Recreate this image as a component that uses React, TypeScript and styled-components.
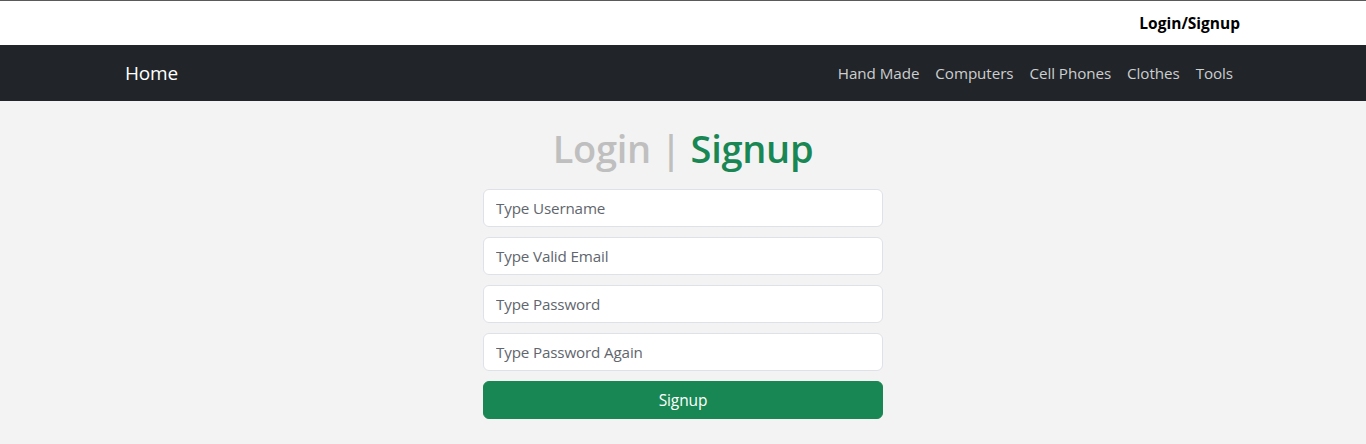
import React from "react";
import styled, { createGlobalStyle } from "styled-components";

const Global = createGlobalStyle`
  * { box-sizing: border-box; }
  body {
    margin: 0;
    font-family: "Open Sans", "Noto Sans", "Liberation Sans", sans-serif;
    background: #f3f3f3;
    color: #212529;
  }
`;

const TopBar = styled.header`
  background: #fff;
  border-top: 1px solid #5a5a5a;
  height: 45px;
`;

const Container = styled.div`
  max-width: 1140px;
  margin: 0 auto;
  padding: 0 12px;
  height: 100%;
  display: flex;
  align-items: center;
`;

const TopRight = styled(Container)`
  justify-content: flex-end;
`;

const TopLink = styled.a`
  font-weight: 700;
  font-size: 15.5px;
  color: #000;
  text-decoration: none;
  margin-right: 1px;
  padding-bottom: 1px;
`;

const NavBar = styled.nav`
  background: #212529;
  height: 56px;
`;

const NavInner = styled(Container)`
  justify-content: space-between;
`;

const Brand = styled.a`
  color: #fff;
  font-size: 19px;
  text-decoration: none;
  letter-spacing: -0.2px;
`;

const NavList = styled.ul`
  list-style: none;
  margin: 0;
  padding: 0;
  display: flex;
`;

const NavLink = styled.a`
  display: block;
  padding: 8px 8px;
  color: rgba(255, 255, 255, 0.78);
  font-size: 15.2px;
  text-decoration: none;
  letter-spacing: -0.07px;
`;

const Main = styled.main`
  display: flex;
  flex-direction: column;
  align-items: center;
  padding-top: 20px;
`;

const Title = styled.h1`
  margin: 0 0 14px;
  font-size: 38px;
  font-weight: 600;
  line-height: 54px;
  letter-spacing: -0.3px;
`;

const Muted = styled.span`
  color: #bfbfbf;
`;

const Accent = styled.span`
  color: #198754;
`;

const Form = styled.form`
  width: 400px;
  display: flex;
  flex-direction: column;
  gap: 10px;
`;

const Input = styled.input`
  height: 38px;
  width: 100%;
  padding: 6px 12px;
  font-family: inherit;
  font-size: 15.2px;
  border: 1px solid #dee2e6;
  border-radius: 6px;
  background: #fff;
  color: #212529;
  letter-spacing: -0.15px;
  &::placeholder { color: #5f666d; }
`;

const Button = styled.button`
  height: 38px;
  width: 100%;
  border: 1px solid #198754;
  border-radius: 6px;
  background: #198754;
  color: #fff;
  font-family: inherit;
  font-size: 15.5px;
  letter-spacing: -0.1px;
`;

export default function App() {
  const links = ["Hand Made", "Computers", "Cell Phones", "Clothes", "Tools"];
  return (
    <>
      <Global />
      <TopBar>
        <TopRight>
          <TopLink href="#">Login/Signup</TopLink>
        </TopRight>
      </TopBar>
      <NavBar>
        <NavInner>
          <Brand href="#">Home</Brand>
          <NavList>
            {links.map((l) => (
              <li key={l}>
                <NavLink href="#">{l}</NavLink>
              </li>
            ))}
          </NavList>
        </NavInner>
      </NavBar>
      <Main>
        <Title>
          <Muted>Login | </Muted>
          <Accent>Signup</Accent>
        </Title>
        <Form onSubmit={(e) => e.preventDefault()}>
          <Input type="text" placeholder="Type Username" />
          <Input type="email" placeholder="Type Valid Email" />
          <Input type="password" placeholder="Type Password" />
          <Input type="password" placeholder="Type Password Again" />
          <Button type="submit">Signup</Button>
        </Form>
      </Main>
    </>
  );
}
